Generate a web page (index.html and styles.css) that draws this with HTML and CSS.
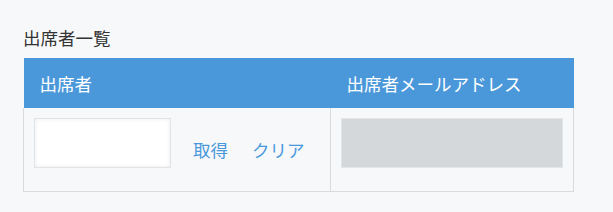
FILE: index.html
```html
<!DOCTYPE html>
<html lang="ja">
<head>
  <meta charset="UTF-8" />
  <title>出席者一覧</title>
  <link rel="stylesheet" href="styles.css">
</head>
<body>
  <div class="container">
    <div class="title">出席者一覧</div>
    <table class="attendee-table">
      <thead>
        <tr>
          <th class="col-name">出席者</th>
          <th class="col-mail">出席者メールアドレス</th>
        </tr>
      </thead>
      <tbody>
        <tr>
          <td>
            <div class="name-cell">
              <input type="text" class="name-input" />
              <a href="#" class="link">取得</a>
              <a href="#" class="link">クリア</a>
            </div>
          </td>
          <td>
            <div class="mail-box"></div>
          </td>
        </tr>
      </tbody>
    </table>
  </div>
</body>
</html>
```

FILE: styles.css
```css
body {
  margin: 0;
  font-family: "Noto Sans CJK JP", "Noto Sans", sans-serif;
  background-color: #f7f8fa;
}

.container {
  padding: 26px 23px 0;
}

.title {
  font-size: 17.5px;
  line-height: 24px;
  color: #333;
  margin-bottom: 8px;
}

.attendee-table {
  width: 551px;
  border-collapse: collapse;
  table-layout: fixed;
}

.attendee-table th {
  background-color: #4a98da;
  color: white;
  font-weight: normal;
  font-size: 17.5px;
  text-align: left;
  height: 50px;
  padding: 0 0 0 16px;
}

.col-name {
  width: 291px;
}

.attendee-table td {
  border: 1px solid #d9dcde;
  border-top: none;
  padding: 10px 10px 23px;
  vertical-align: top;
}

.name-cell {
  display: flex;
  align-items: flex-start;
}

.name-input {
  flex-shrink: 0;
  width: 137px;
  height: 50px;
  box-sizing: border-box;
  border: 1px solid #e1e4e6;
  box-shadow: inset 0 0 4px rgba(0, 0, 0, 0.08);
  background: white;
  outline: none;
  margin: 0 22px 0 0;
  padding: 0;
}

.link {
  flex-shrink: 0;
  white-space: nowrap;
  color: #4a98da;
  text-decoration: none;
  font-size: 17.5px;
  line-height: 24px;
  margin-top: 20px;
  margin-right: 24px;
}

.link:last-child {
  margin-right: 0;
}

.mail-box {
  height: 50px;
  box-sizing: border-box;
  background-color: #d5d8da;
  border: 1px solid #e3e6e8;
}
```
